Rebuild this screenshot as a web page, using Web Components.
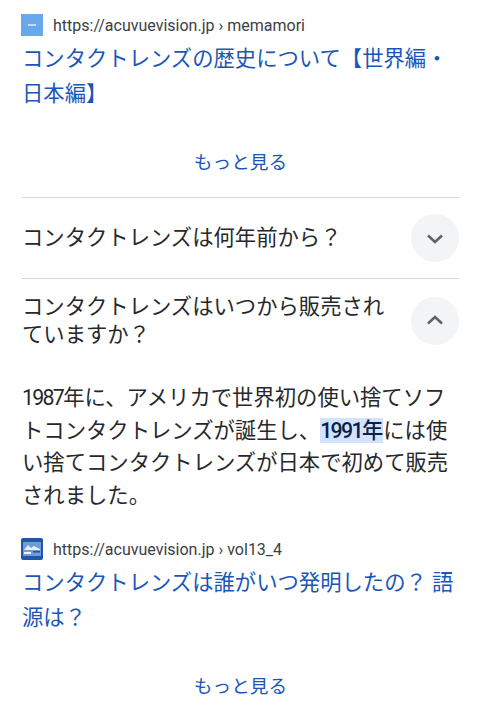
<!DOCTYPE html>
<html lang="ja">
<head>
<meta charset="utf-8">
<style>
  html, body { margin: 0; background: #fff; }
  body {
    width: 480px;
    height: 712px;
    overflow: hidden;
    font-family: Roboto, "Noto Sans CJK JP", sans-serif;
    color: #27282b;
  }
  main { display: block; padding: 14px 21px 0 22px; }
  .num { letter-spacing: -1.7px; }
</style>
</head>
<body>
<main>
  <search-result url="https://acuvuevision.jp" crumb="memamori" icon="plain">
    コンタクトレンズの歴史について【世界編・日本編】
  </search-result>
  <more-link></more-link>
  <faq-row question="コンタクトレンズは何年前から？"></faq-row>
  <faq-row question="コンタクトレンズはいつから販売されていますか？" open>
    <span class="num">1987</span>年に、アメリカで世界初の使い捨てソフトコンタクトレンズが誕生し、<mark><span class="num">1991</span>年</mark>には使い捨てコンタクトレンズが日本で初めて販売されました。
  </faq-row>
  <search-result url="https://acuvuevision.jp" crumb="vol13_4" icon="photo">
    コンタクトレンズは誰がいつ発明したの？ 語源は？
  </search-result>
  <more-link></more-link>
</main>

<script>
const ICONS = {
  plain: `<svg viewBox="0 0 22 22" width="22" height="22">
      <rect width="22" height="22" fill="#68a9ee"/>
      <rect x="7" y="10" width="8" height="2" fill="#c4dcf6"/>
    </svg>`,
  photo: `<svg viewBox="0 0 22 22" width="22" height="22">
      <rect width="22" height="22" rx="2" fill="#1f55ab"/>
      <rect x="2" y="4" width="18" height="14" fill="#6f9bd8"/>
      <path d="M3 12l4-5 3 3 3-2 6 3v1H3z" fill="#e4eefb"/>
      <rect x="3" y="14" width="7" height="2" fill="#f2f6fc"/>
      <rect x="12" y="13" width="7" height="1.5" fill="#1f55ab"/>
    </svg>`
};

class SearchResult extends HTMLElement {
  constructor() {
    super();
    this.attachShadow({ mode: "open" });
  }

  connectedCallback() {
    const url = this.getAttribute("url") || "";
    const crumb = this.getAttribute("crumb") || "";
    const icon = ICONS[this.getAttribute("icon")] || "";
    this.shadowRoot.innerHTML = `
      <style>
        :host { display: block; }
        .head {
          display: flex;
          align-items: center;
          gap: 10px;
          height: 22px;
          margin-left: -1px;
          font-size: 16px;
          color: #3c4043;
        }
        svg { display: block; }
        .title {
          display: block;
          margin-top: 6px;
          font-size: 21.33px;
          line-height: 34.5px;
          color: #1a56b8;
        }
      </style>
      <div class="head">${icon}<span>${url} › ${crumb}</span></div>
      <span class="title"><slot></slot></span>
    `;
  }
}

class MoreLink extends HTMLElement {
  constructor() {
    super();
    this.attachShadow({ mode: "open" });
  }

  connectedCallback() {
    this.shadowRoot.innerHTML = `
      <style>
        :host {
          display: flex;
          justify-content: center;
          align-items: center;
          height: 50px;
          margin-top: 24px;
          margin-bottom: 12px;
          font-size: 18.67px;
          color: #1a56b8;
        }
      </style>
      もっと見る
    `;
  }
}

class FaqRow extends HTMLElement {
  constructor() {
    super();
    this.attachShadow({ mode: "open" });
  }

  connectedCallback() {
    const open = this.hasAttribute("open");
    const chevron = open ? "M5 14.5l7-6.5 7 6.5" : "M5 9.5l7 6.5 7-6.5";
    this.shadowRoot.innerHTML = `
      <style>
        :host {
          display: block;
          border-top: 1.5px solid #d5d6d8;
          font-size: 21.33px;
        }
        .row {
          box-sizing: border-box;
          display: flex;
          align-items: center;
          justify-content: space-between;
          gap: 18px;
          min-height: 80px;
          line-height: 28px;
        }
        .question { flex: 1; }
        .btn {
          flex: none;
          display: grid;
          place-items: center;
          width: 48px;
          height: 48px;
          border-radius: 50%;
          background: #f3f4f5;
        }
        svg { display: block; fill: none; stroke: #5f6368; stroke-width: 2.6; }
        .answer {
          padding: 17px 0 26px;
          line-height: 32.5px;
        }
        ::slotted(mark) {
          background: #d3e3fd;
          color: #0b1f4a;
          font-weight: 500;
        }
      </style>
      <div class="row" style="${open ? "padding: 14px 0 16px" : ""}">
        <span class="question">${this.getAttribute("question")}</span>
        <span class="btn"><svg viewBox="0 0 24 24" width="24" height="24"><path d="${chevron}"/></svg></span>
      </div>
      ${open ? `<div class="answer"><slot></slot></div>` : ""}
    `;
  }
}

customElements.define("search-result", SearchResult);
customElements.define("more-link", MoreLink);
customElements.define("faq-row", FaqRow);
</script>
</body>
</html>
